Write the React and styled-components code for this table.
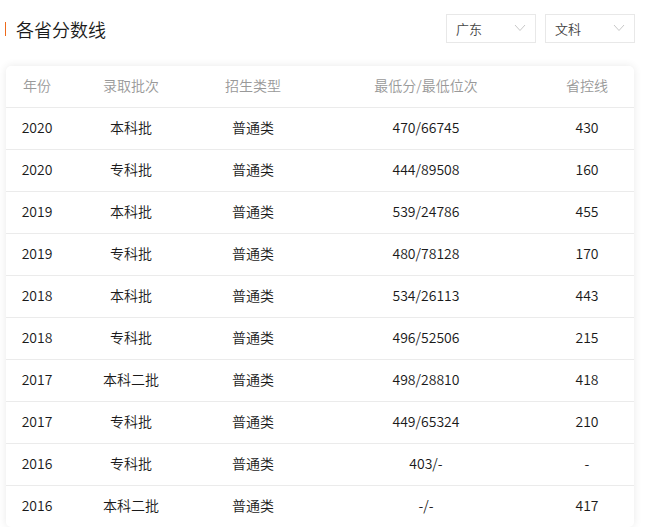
import React from 'react';
import styled, { createGlobalStyle } from 'styled-components';

const GlobalStyle = createGlobalStyle`
  body {
    margin: 0;
    background: #fff;
    font-family: "Noto Sans CJK SC", "Noto Sans", sans-serif;
  }
`;

const Page = styled.div`
  width: 648px;
  padding: 14px 0 0 0;
  box-sizing: border-box;
`;

const Header = styled.div`
  display: flex;
  align-items: center;
  justify-content: space-between;
  padding: 0 13px 0 5px;
  height: 29px;
`;

const Title = styled.h2`
  margin: 0;
  display: flex;
  align-items: center;
  font-size: 18px;
  font-weight: 350;
  color: #1a1a1a;
  line-height: 1;
  &::before {
    content: '';
    width: 1px;
    height: 14px;
    background: #ee6a1c;
    margin-right: 10px;
  }
`;

const Selects = styled.div`
  display: flex;
  gap: 9px;
`;

const Select = styled.div`
  width: 90px;
  height: 29px;
  box-sizing: border-box;
  border: 1px solid #e8e8e8;
  display: flex;
  align-items: center;
  justify-content: space-between;
  padding: 0 9px 1px 9px;
  font-size: 13px;
  font-weight: 350;
  color: #444;
`;

const Card = styled.div`
  margin: 23px 14px 0 6px;
  background: #fff;
  border-radius: 5px;
  box-shadow: 0 0 8px rgba(0, 0, 0, 0.09);
  overflow: hidden;
`;

const Table = styled.table`
  width: 100%;
  border-collapse: collapse;
  table-layout: fixed;
`;

const Th = styled.th`
  height: 38px;
  padding: 0 0 3px 0;
  font-size: 14px;
  font-weight: 350;
  color: #999;
  text-align: center;
  width: ${(p) => p.$w}px;
`;

const Row = styled.tr`
  border-top: 1px solid #ebebeb;
`;

const Td = styled.td`
  height: 38px;
  padding: 0 0 3px 0;
  font-size: 14px;
  font-weight: 350;
  color: #1a1a1a;
  text-align: center;
`;

const Chevron = () => (
  <svg width="12" height="8" viewBox="0 0 12 8" fill="none">
    <path d="M1 1l5 5.5L11 1" stroke="#c8c8c8" strokeWidth="1" />
  </svg>
);

const columns = [
  { label: '年份', w: 62 },
  { label: '录取批次', w: 126 },
  { label: '招生类型', w: 118 },
  { label: '最低分/最低位次', w: 228 },
  { label: '省控线', w: 94 },
];

const rows = [
  ['2020', '本科批', '普通类', '470/66745', '430'],
  ['2020', '专科批', '普通类', '444/89508', '160'],
  ['2019', '本科批', '普通类', '539/24786', '455'],
  ['2019', '专科批', '普通类', '480/78128', '170'],
  ['2018', '本科批', '普通类', '534/26113', '443'],
  ['2018', '专科批', '普通类', '496/52506', '215'],
  ['2017', '本科二批', '普通类', '498/28810', '418'],
  ['2017', '专科批', '普通类', '449/65324', '210'],
  ['2016', '专科批', '普通类', '403/-', '-'],
  ['2016', '本科二批', '普通类', '-/-', '417'],
];

export default function App() {
  return (
    <Page>
      <GlobalStyle />
      <Header>
        <Title>各省分数线</Title>
        <Selects>
          <Select>
            广东
            <Chevron />
          </Select>
          <Select>
            文科
            <Chevron />
          </Select>
        </Selects>
      </Header>
      <Card>
        <Table>
          <thead>
            <tr>
              {columns.map((c) => (
                <Th key={c.label} $w={c.w}>{c.label}</Th>
              ))}
            </tr>
          </thead>
          <tbody>
            {rows.map((r, i) => (
              <Row key={i}>
                {r.map((v, j) => (
                  <Td key={j}>{v}</Td>
                ))}
              </Row>
            ))}
          </tbody>
        </Table>
      </Card>
    </Page>
  );
}
